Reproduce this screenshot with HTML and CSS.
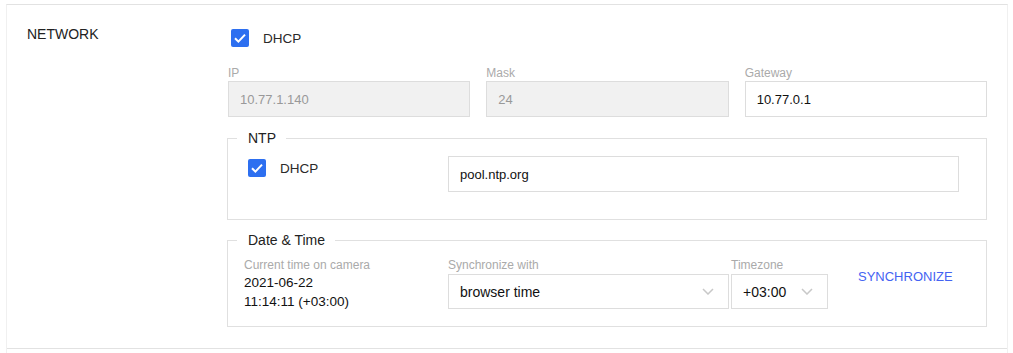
FILE: index.html
```html
<!DOCTYPE html>
<html lang="en">
<head>
  <meta charset="UTF-8" />
  <meta name="viewport" content="width=device-width, initial-scale=1.0"/>
  <title>Network settings</title>
  <link rel="stylesheet" href="styles.css">
</head>
<body>
  <div class="panel">
    <div class="row">
      <div class="row-title">NETWORK</div>
      <div class="row-body">
        <label class="check-line">
          <span class="check"><svg width="18" height="18" viewBox="0 0 18 18"><polyline points="4,9.2 7.4,12.6 14,5.6" fill="none" stroke="#fff" stroke-width="2"/></svg></span>
          <span class="check-text">DHCP</span>
        </label>

        <div class="fields">
          <div class="field">
            <div class="field-label">IP</div>
            <input class="text-input" type="text" value="10.77.1.140" disabled />
          </div>
          <div class="field">
            <div class="field-label">Mask</div>
            <input class="text-input" type="text" value="24" disabled />
          </div>
          <div class="field">
            <div class="field-label">Gateway</div>
            <input class="text-input" type="text" value="10.77.0.1" />
          </div>
        </div>

        <fieldset class="group">
          <legend>NTP</legend>
          <div class="ntp">
            <label class="check-line ntp-dhcp">
              <span class="check"><svg width="18" height="18" viewBox="0 0 18 18"><polyline points="4,9.2 7.4,12.6 14,5.6" fill="none" stroke="#fff" stroke-width="2"/></svg></span>
              <span class="check-text">DHCP</span>
            </label>
            <input class="text-input ntp-server" type="text" value="pool.ntp.org" />
          </div>
        </fieldset>

        <fieldset class="group group-clock">
          <legend>Date &amp; Time</legend>
          <div class="clock">
            <div class="clock-now">
              <div class="field-label">Current time on camera</div>
              <div class="clock-value">2021-06-22</div>
              <div class="clock-value">11:14:11 (+03:00)</div>
            </div>
            <div class="clock-sync">
              <div class="field-label">Synchronize with</div>
              <div class="select">
                <span>browser time</span>
                <svg width="12" height="7" viewBox="0 0 12 7"><polyline points="1,1 6,6 11,1" fill="none" stroke="#c8c8c8" stroke-width="1.5"/></svg>
              </div>
            </div>
            <div class="clock-tz">
              <div class="field-label">Timezone</div>
              <div class="select">
                <span>+03:00</span>
                <svg width="12" height="7" viewBox="0 0 12 7"><polyline points="1,1 6,6 11,1" fill="none" stroke="#c8c8c8" stroke-width="1.5"/></svg>
              </div>
            </div>
            <button class="sync-btn" type="button">SYNCHRONIZE</button>
          </div>
        </fieldset>
      </div>
    </div>
    <div class="row-rest"></div>
  </div>
</body>
</html>
```

FILE: styles.css
```css
body {
  font-family: "Liberation Sans", Arial, sans-serif;
  margin: 0;
  background: white;
  color: #222;
}
.panel {
  margin: 4px 5px 0 6px;
  border-top: 1px solid #e2e2e2;
  border-left: 1px solid #f0f0f0;
  border-right: 1px solid #f0f0f0;
}
.row {
  display: flex;
  padding: 20px 19px 21px 20px;
  border-bottom: 1px solid #e2e2e2;
}
.row-title {
  width: 200px;
  flex: none;
  font-size: 14px;
  line-height: 18px;
}
.row-body {
  width: 760px;
  padding-top: 4px;
}
.row-rest {
  height: 10px;
}
.check-line {
  display: flex;
  align-items: center;
  height: 18px;
  margin-left: 4px;
}
.check {
  width: 18px;
  height: 18px;
  border-radius: 2px;
  background: #2d6ff0;
  display: block;
}
.check svg {
  display: block;
}
.check-text {
  margin-left: 14px;
  font-size: 13.5px;
  color: #2a2a2a;
}
.fields {
  display: grid;
  grid-template-columns: repeat(3, 1fr);
  column-gap: 16px;
  margin: 18px 0 0 1px;
}
.field-label {
  font-size: 12px;
  line-height: 16px;
  color: #aaa;
}
.text-input {
  box-sizing: border-box;
  display: block;
  width: 100%;
  height: 36px;
  margin: 0;
  padding: 0 11px;
  border: 1px solid #ddd;
  border-radius: 0;
  background: white;
  font-family: inherit;
  font-size: 13px;
  color: #111;
  outline: none;
}
.text-input:disabled {
  background: #f1f1f1;
  color: #999;
}
.group {
  margin: 13px 0 0;
  padding: 0 9px;
  min-width: 0;
  border: 1px solid #e0e0e0;
}
.group legend {
  padding: 0 10px 0 11px;
  font-size: 14px;
  line-height: 16px;
  color: #222;
}
.group-clock {
  margin-top: 12px;
}
.ntp {
  display: flex;
  align-items: flex-start;
  padding: 10px 18px 27px 11px;
}
.ntp-dhcp {
  width: 200px;
  flex: none;
  margin: 3px 0 0;
}
.ntp-server {
  flex: 1;
  width: auto;
}
.clock {
  display: flex;
  align-items: flex-start;
  padding: 9px 0 15px 7px;
}
.clock-now {
  width: 204px;
  flex: none;
}
.clock-value {
  font-size: 13.5px;
  line-height: 19px;
  color: #111;
}
.clock-sync {
  width: 281px;
  flex: none;
}
.clock-tz {
  width: 97px;
  flex: none;
  margin-left: 2px;
}
.select {
  box-sizing: border-box;
  height: 35px;
  margin-top: 1px;
  padding: 0 14px 0 11px;
  border: 1px solid #ddd;
  display: flex;
  align-items: center;
  justify-content: space-between;
  font-size: 14px;
  color: #111;
}
.select svg {
  display: block;
}
.sync-btn {
  margin: 12px 0 0 30px;
  padding: 0;
  border: none;
  background: none;
  font-family: inherit;
  font-size: 13px;
  line-height: 16px;
  color: #4463f2;
  cursor: pointer;
}
```
